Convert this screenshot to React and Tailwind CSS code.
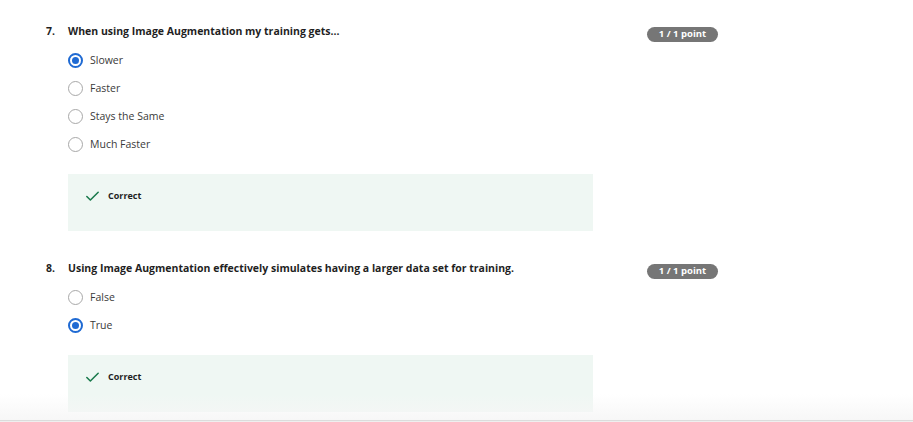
import { Check } from 'lucide-react'

const questions = [
  {
    num: '7.',
    text: 'When using Image Augmentation my training gets...',
    options: ['Slower', 'Faster', 'Stays the Same', 'Much Faster'],
    selected: 0,
  },
  {
    num: '8.',
    text: 'Using Image Augmentation effectively simulates having a larger data set for training.',
    options: ['False', 'True'],
    selected: 1,
  },
]

function Radio({ checked }) {
  if (checked) {
    return (
      <span className="w-[15px] h-[15px] rounded-full border-2 border-[#1f6ad3] flex items-center justify-center shrink-0">
        <span className="w-[7px] h-[7px] rounded-full bg-[#1f6ad3]" />
      </span>
    )
  }
  return <span className="w-[15px] h-[15px] rounded-full border-[1.5px] border-[#a8a8a8] shrink-0" />
}

function Question({ q, first }) {
  return (
    <div className={`flex ${first ? 'mt-[24px]' : 'mt-[30px]'}`}>
      <div className="w-[22px] text-[10.5px] font-bold leading-[14px] text-[#1f1f1f]">{q.num}</div>
      <div className="w-[525px]">
        <p className="text-[10.5px] font-bold leading-[14px] text-[#1f1f1f]">{q.text}</p>
        <div className="mt-[8px]">
          {q.options.map((o, i) => (
            <div key={o} className="h-[28px] flex items-center gap-[7px]">
              <Radio checked={i === q.selected} />
              <span className="text-[10.5px] text-[#3a3a3a] leading-none">{o}</span>
            </div>
          ))}
        </div>
        <div className="mt-[16px] h-[57px] bg-[#eff7f3] pl-[16px] pt-[16px]">
          <div className="flex items-center gap-[7px] h-[12px]">
            <Check size={17} strokeWidth={2.2} className="text-[#1a7a4c]" />
            <span className="text-[9px] font-bold text-[#1f1f1f]">Correct</span>
          </div>
        </div>
      </div>
      <div className="ml-[54px] mt-[3px]">
        <span className="h-[15px] w-[71px] rounded-full bg-[#767676] text-white text-[9.5px] font-bold flex items-center justify-center">
          1 / 1 point
        </span>
      </div>
    </div>
  )
}

export default function App() {
  return (
    <div
      className="relative h-[422px] w-[913px] overflow-hidden bg-white pl-[46px]"
      style={{ fontFamily: '"Open Sans", "Liberation Sans", sans-serif' }}
    >
      {questions.map((q, i) => (
        <Question key={q.num} q={q} first={i === 0} />
      ))}
      <div className="absolute left-0 right-0 bottom-0 h-[28px] bg-gradient-to-b from-transparent to-[#f6f6f6]/90 border-b-[2px] border-b-[#dcdcdc] pointer-events-none" />
      <div className="absolute left-0 right-0 bottom-0 h-px bg-[#efefef]" />
    </div>
  )
}
